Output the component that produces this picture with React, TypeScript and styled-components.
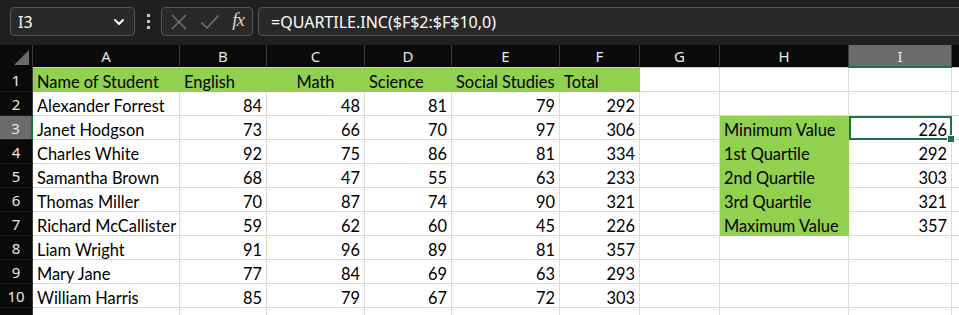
import styled, { createGlobalStyle } from "styled-components";

const GlobalStyle = createGlobalStyle`
    html, body {
        margin: 0;
        padding: 0;
        background: #1f1f1f;
        overflow: hidden;
    }
`;

const COLS = [33, 147, 87, 98, 87, 108, 80, 80, 129, 103, 20];
const LETTERS = ["A", "B", "C", "D", "E", "F", "G", "H", "I", ""];
const GREEN = "#92d050";
const ACCENT = "#1e7145";

const Page = styled.div`
    width: 959px;
    height: 315px;
    overflow: hidden;
    background: #1f1f1f;
    font-family: Lato, "Liberation Sans", sans-serif;
`;

const Toolbar = styled.div`
    height: 45px;
    display: flex;
    align-items: flex-start;
    padding: 7px 0 0 10px;
    box-sizing: border-box;
`;

const Box = styled.div<{ $w?: number; $grow?: boolean }>`
    height: 29px;
    box-sizing: border-box;
    border: 1px solid #555;
    border-radius: 4px;
    background: #292929;
    display: flex;
    align-items: center;
    width: ${(p) => (p.$w ? `${p.$w}px` : "auto")};
    flex: ${(p) => (p.$grow ? "1 0 auto" : "0 0 auto")};
    margin-right: ${(p) => (p.$grow ? "-10px" : "0")};
    color: #fff;
    font-family: "Noto Sans", "Open Sans", sans-serif;
    font-size: 15px;
`;

const NameText = styled.span`
    flex: 1;
    padding-left: 7px;
    font-size: 16px;
    color: #fff;
`;

const Dots = styled.div`
    width: 26px;
    height: 29px;
    display: flex;
    flex-direction: column;
    align-items: center;
    justify-content: center;
    gap: 3px;

    span {
        width: 3px;
        height: 3px;
        background: #c8c8c8;
    }
`;

const FxButtons = styled.div`
    display: flex;
    align-items: center;
    width: 100%;
    padding: 0 8px;
    box-sizing: border-box;
    justify-content: space-between;
`;

const FxLabel = styled.span`
    font-family: "Liberation Serif", serif;
    font-style: italic;
    font-size: 19px;
    color: #d6d6d6;
    margin-top: -3px;
    letter-spacing: -1px;
`;

const FormulaText = styled.span`
    padding-left: 12px;
    font-size: 16px;
    color: #fff;
`;

const Grid = styled.div`
    display: grid;
    grid-template-columns: ${COLS.map((c) => `${c}px`).join(" ")};
    grid-template-rows: 23px repeat(11, 24px);
    background: #fff;
`;

const Corner = styled.div`
    background: #0a0a0a;
    border-right: 1px solid #3c3c3c;
    position: relative;

    &::after {
        content: "";
        position: absolute;
        right: 3px;
        bottom: 3px;
        border-style: solid;
        border-width: 0 0 15px 15px;
        border-color: transparent transparent #6b6b6b transparent;
    }
`;

const ColHead = styled.div<{ $active?: boolean }>`
    background: ${(p) => (p.$active ? "#6b6b6b" : "#0a0a0a")};
    color: #e8e8e8;
    font-family: "Noto Sans", "Open Sans", sans-serif;
    font-size: 15px;
    display: flex;
    align-items: center;
    justify-content: center;
    border-right: 1px solid #3c3c3c;
    border-bottom: ${(p) => (p.$active ? `2px solid ${ACCENT}` : "1px solid #d0d0d0")};
    box-sizing: border-box;
`;

const RowHead = styled.div<{ $active?: boolean }>`
    background: ${(p) => (p.$active ? "#6b6b6b" : "#0a0a0a")};
    color: #e8e8e8;
    font-family: "Noto Sans", "Open Sans", sans-serif;
    font-size: 15px;
    display: flex;
    align-items: center;
    justify-content: center;
    padding-top: 1px;
    border-right: ${(p) => (p.$active ? `2px solid ${ACCENT}` : "1px solid #3c3c3c")};
    border-bottom: 1px solid #1c1c1c;
    box-sizing: border-box;
`;

const Cell = styled.div<{ $fill?: boolean; $align?: string; $active?: boolean }>`
    position: relative;
    background: ${(p) => (p.$fill ? GREEN : "#fff")};
    border-right: 1px solid ${(p) => (p.$fill ? GREEN : "#dcdcdc")};
    border-bottom: 1px solid ${(p) => (p.$fill ? GREEN : "#dcdcdc")};
    box-sizing: border-box;
    display: flex;
    align-items: flex-end;
    justify-content: ${(p) => p.$align || "flex-start"};
    padding: 0 4px 0 4px;
    font-size: 16.4px;
    color: #000;
    white-space: nowrap;
    overflow: visible;
    outline: ${(p) => (p.$active ? `2px solid ${ACCENT}` : "none")};
    outline-offset: -2px;
    z-index: ${(p) => (p.$active ? 2 : 0)};
`;

const Handle = styled.span`
    position: absolute;
    right: -4px;
    bottom: -4px;
    width: 6px;
    height: 6px;
    background: ${ACCENT};
    border: 1px solid #fff;
`;

const students: [string, number, number, number, number][] = [
    ["Alexander Forrest", 84, 48, 81, 79],
    ["Janet Hodgson", 73, 66, 70, 97],
    ["Charles White", 92, 75, 86, 81],
    ["Samantha Brown", 68, 47, 55, 63],
    ["Thomas Miller", 70, 87, 74, 90],
    ["Richard McCallister", 59, 62, 60, 45],
    ["Liam Wright", 91, 96, 89, 81],
    ["Mary Jane", 77, 84, 69, 63],
    ["William Harris", 85, 79, 67, 72],
];

const summary: Record<number, [string, number]> = {
    3: ["Minimum Value", 226],
    4: ["1st Quartile", 292],
    5: ["2nd Quartile", 303],
    6: ["3rd Quartile", 321],
    7: ["Maximum Value", 357],
};

const headers = ["Name of Student", "English", "Math", "Science", "Social Studies", "Total"];

function XIcon() {
    return (
        <svg width="18" height="18" viewBox="0 0 18 18">
            <path d="M2 2 L16 16 M16 2 L2 16" stroke="#7a7a7a" strokeWidth="1.3" fill="none" />
        </svg>
    );
}

function CheckIcon() {
    return (
        <svg width="20" height="18" viewBox="0 0 20 18">
            <path d="M1.5 9.5 L7 15 L18.5 2.5" stroke="#7a7a7a" strokeWidth="1.3" fill="none" />
        </svg>
    );
}

function Chevron() {
    return (
        <svg width="12" height="12" viewBox="0 0 12 12" style={{ marginRight: 9 }}>
            <path d="M2 4 L6 8 L10 4" stroke="#fff" strokeWidth="2" fill="none" strokeLinecap="round" strokeLinejoin="round" />
        </svg>
    );
}

export default function App() {
    const rows: JSX.Element[] = [];

    for (let r = 1; r <= 11; r++) {
        const cells: (string | number | null)[] = Array(10).fill(null);
        let fill = Array(10).fill(false);
        if (r === 1) {
            headers.forEach((h, i) => (cells[i] = h));
            fill = fill.map((_, i) => i < 6);
        } else if (r <= 10) {
            const s = students[r - 2];
            cells[0] = s[0];
            cells[1] = s[1];
            cells[2] = s[2];
            cells[3] = s[3];
            cells[4] = s[4];
            cells[5] = s[1] + s[2] + s[3] + s[4];
        }
        if (summary[r]) {
            cells[7] = summary[r][0];
            cells[8] = summary[r][1];
            fill[7] = true;
        }

        rows.push(
            <RowHead key={`rh${r}`} $active={r === 3}>
                {r <= 10 ? r : ""}
            </RowHead>
        );
        cells.forEach((v, c) => {
            const numeric = typeof v === "number";
            const align = numeric ? "flex-end" : r === 1 && c === 2 ? "center" : "flex-start";
            const active = r === 3 && c === 8;
            rows.push(
                <Cell key={`c${r}-${c}`} $fill={fill[c]} $align={align} $active={active}>
                    {v}
                    {active && <Handle />}
                </Cell>
            );
        });
    }

    return (
        <Page>
            <GlobalStyle />
            <Toolbar>
                <Box $w={125}>
                    <NameText>I3</NameText>
                    <Chevron />
                </Box>
                <Dots>
                    <span />
                    <span />
                    <span />
                </Dots>
                <Box $w={92}>
                    <FxButtons>
                        <XIcon />
                        <CheckIcon />
                        <FxLabel>fx</FxLabel>
                    </FxButtons>
                </Box>
                <Box $grow style={{ marginLeft: 5 }}>
                    <FormulaText>=QUARTILE.INC($F$2:$F$10,0)</FormulaText>
                </Box>
            </Toolbar>
            <Grid>
                <Corner />
                {LETTERS.map((l, i) => (
                    <ColHead key={i} $active={l === "I"}>
                        {l}
                    </ColHead>
                ))}
                {rows}
            </Grid>
        </Page>
    );
}
